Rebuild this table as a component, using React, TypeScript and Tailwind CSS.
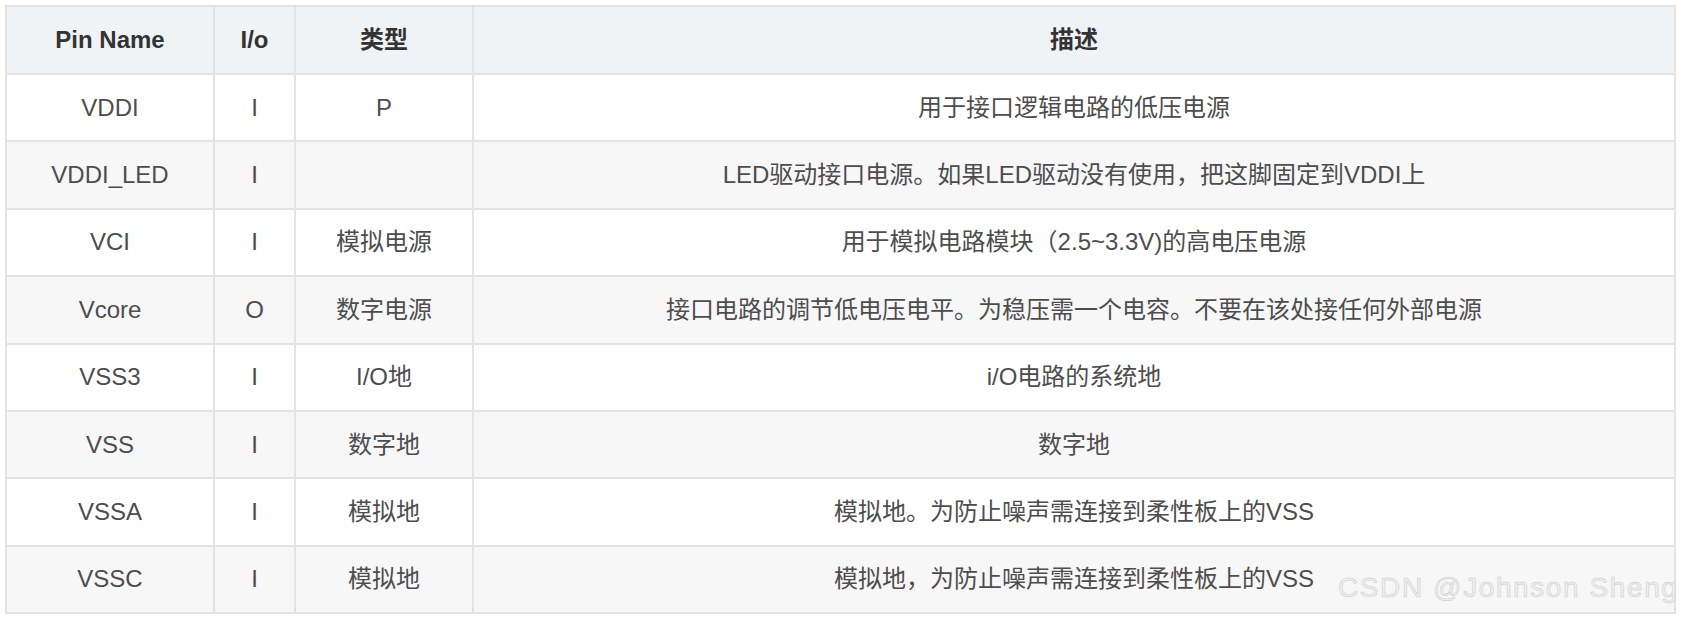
const rows: [string, string, string, string][] = [
  ["VDDI", "I", "P", "用于接口逻辑电路的低压电源"],
  ["VDDI_LED", "I", "", "LED驱动接口电源。如果LED驱动没有使用，把这脚固定到VDDI上"],
  ["VCI", "I", "模拟电源", "用于模拟电路模块（2.5~3.3V)的高电压电源"],
  ["Vcore", "O", "数字电源", "接口电路的调节低电压电平。为稳压需一个电容。不要在该处接任何外部电源"],
  ["VSS3", "I", "I/O地", "i/O电路的系统地"],
  ["VSS", "I", "数字地", "数字地"],
  ["VSSA", "I", "模拟地", "模拟地。为防止噪声需连接到柔性板上的VSS"],
  ["VSSC", "I", "模拟地", "模拟地，为防止噪声需连接到柔性板上的VSS"],
];

export default function App() {
  const cell = "border-2 border-[#e3e3e3] text-center align-middle p-0";

  return (
    <div className="relative h-[621px] w-[1682px] overflow-hidden bg-white pl-[5px] pt-[5px] font-['Liberation_Sans','Noto_Sans_CJK_SC',sans-serif] text-[24px] text-[#4d4d4d]">
      <table className="w-[1671px] table-fixed border-collapse">
        <colgroup>
          <col className="w-[208px]" />
          <col className="w-[81px]" />
          <col className="w-[178px]" />
          <col />
        </colgroup>
        <thead>
          <tr className="h-[68px] bg-[#eff3f6] font-bold text-[#333]">
            <th className={cell}>Pin Name</th>
            <th className={cell}>I/o</th>
            <th className={cell}>类型</th>
            <th className={cell}>描述</th>
          </tr>
        </thead>
        <tbody>
          {rows.map((r, i) => (
            <tr key={r[0]} className={`h-[67.4px] ${i % 2 === 1 ? "bg-[#f7f7f7]" : "bg-white"}`}>
              <td className={cell}>{r[0]}</td>
              <td className={cell}>{r[1]}</td>
              <td className={cell}>{r[2]}</td>
              <td className={cell}>{r[3]}</td>
            </tr>
          ))}
        </tbody>
      </table>

      {/* watermark */}
      <span className="absolute left-[1338px] top-[574px] whitespace-nowrap text-[28px] leading-none tracking-[1.6px] text-[#f0f0f0] [-webkit-text-stroke:0.5px_#c8c8c8]">
        CSDN @Johnson Sheng
      </span>
    </div>
  );
}
